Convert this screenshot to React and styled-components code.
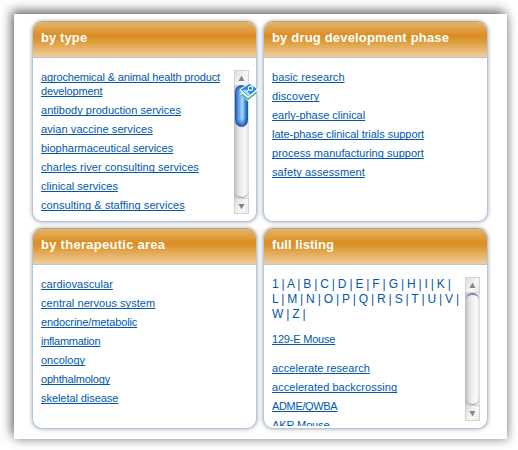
import React from 'react';
import styled, { createGlobalStyle } from 'styled-components';

const GlobalStyle = createGlobalStyle`
  body {
    margin: 0;
    background: #ffffff;
    font-family: 'Liberation Sans', Arial, sans-serif;
  }
`;

const Page = styled.div`
  box-sizing: border-box;
  width: 518px;
  height: 450px;
  padding: 14px 11px 11px 14px;
  overflow: hidden;
`;

const Sheet = styled.main`
  box-sizing: border-box;
  width: 493px;
  height: 425px;
  padding: 7px 0 0 18px;
  background: #ffffff;
  box-shadow:
    -3px -4px 10px rgba(0, 0, 0, 0.5),
    2px 2px 9px rgba(0, 0, 0, 0.26);
`;

const Grid = styled.div`
  display: grid;
  grid-template-columns: 225px 225px;
  grid-template-rows: 201px 201px;
  gap: 6px;
`;

const Panel = styled.section`
  box-sizing: border-box;
  display: flex;
  flex-direction: column;
  border: 1px solid #b0c6df;
  border-top-color: #a9a698;
  border-radius: 10px;
  background: #ffffff;
  box-shadow: 0 0 4px rgba(0, 0, 0, 0.35);
`;

const PanelTitle = styled.h2`
  box-sizing: border-box;
  flex: none;
  height: 36px;
  margin: 0;
  padding: 0 8px;
  border-bottom: 1px solid #b9c9da;
  border-radius: 9px 9px 0 0;
  background: linear-gradient(#e5b268 0%, #e0a146 20%, #da8c20 40%, #e0a144 60%, #f0cd9b 100%);
  color: #ffffff;
  font-size: 13px;
  font-weight: bold;
  line-height: 32px;
  letter-spacing: ${({ $spacing }) => $spacing || 0}px;
  white-space: nowrap;
`;

const PanelBody = styled.div`
  display: flex;
  justify-content: space-between;
  height: ${({ $height }) => $height || 142}px;
  margin-top: 12px;
  padding: 0 7px 0 8px;
`;

const LinkList = styled.ul`
  flex: 1;
  min-width: 0;
  margin: 0;
  padding: 0;
  list-style: none;
`;

const Listing = styled.div`
  flex: 1;
  min-width: 0;
  overflow: hidden;
`;

const LinkItem = styled.li`
  margin: 0 0 ${({ $gap }) => $gap || 5}px;
  font-size: 11px;
  line-height: 14px;
  white-space: nowrap;
`;

const Link = styled.a`
  color: #0058ac;
  letter-spacing: ${({ $spacing }) => $spacing || 0}px;
  text-decoration: underline;
  text-decoration-thickness: 1px;
  text-decoration-skip-ink: none;
  text-underline-offset: 1px;
`;

const Letters = styled.p`
  margin: 0 0 10px;
  color: #0058ac;
  font-size: 12px;
  line-height: 15px;
  word-spacing: -0.42px;
`;

const LetterRow = styled.span`
  display: block;
  white-space: nowrap;
`;

const ScrollTrack = styled.div`
  position: relative;
  flex: none;
  display: flex;
  flex-direction: column;
  width: 15px;
  height: 144px;
  background: linear-gradient(90deg, #b9b9b9, #dedede 25%, #ececec 45%, #fafafa 75%, #dcdcdc);
`;

const ScrollButton = styled.div`
  display: flex;
  align-items: center;
  justify-content: center;
  box-sizing: border-box;
  height: 16px;
  border: 1px solid #d2d2d2;
  background: linear-gradient(120deg, #dddddd, #f8f8f8 60%, #e8e8e8);
`;

const ScrollLane = styled.div`
  flex: 1;
  border-radius: 0 0 8px 8px;
  border-bottom: 1px solid #a0a0a0;
`;

const ScrollThumb = styled.div`
  box-sizing: border-box;
  width: 13px;
  height: 42px;
  margin: -1px 1px 0;
  border: 1px solid #1c55b4;
  border-radius: 7px;
  background:
    linear-gradient(rgba(10, 45, 130, 0.6), transparent 12%, transparent 82%, rgba(10, 50, 170, 0.7)),
    linear-gradient(90deg, #2869cf, #78b5f2 35%, #a5d8fc 60%, #4e94e2 80%, #245fba);
`;

const ThumbEdge = styled.div`
  height: 4px;
  margin: 0 1px;
  border-top: 2px solid #73839f;
  border-radius: 7px 7px 0 0;
`;

const Badge = styled.svg`
  position: absolute;
  left: 5px;
  top: 12px;
`;

function Arrow({ down }) {
  return (
    <svg width="7" height="7" viewBox="0 0 7 7">
      <path d={down ? 'M0.5 1h6L3.5 6.5z' : 'M0.5 6h6L3.5 0.5z'} fill="#858585" />
    </svg>
  );
}

function ImageBadge() {
  return (
    <Badge width="20" height="20" viewBox="0 0 20 20">
      <path d="M1 11.5L17 8l2.5 2.500L9 19.500z" fill="#ffffff" />
      <path d="M2.500 12.500L9 17l9-7" fill="none" stroke="#5fb87a" strokeWidth="2" />
      <path d="M0.500 7.500L10.500 0.500l9 6.500-10.200 9z" fill="#ffffff" />
      <path d="M2 7.600L10.500 1.700l7.500 5.200-8.700 7.600z" fill="#2389e2" />
      <path d="M3.500 8l2.800-0.600 5.200 5-2.200 1.500z" fill="#a6dcfb" />
      <circle cx="11.500" cy="6.300" r="2.100" fill="#1b70ce" stroke="#ffffff" strokeWidth="1.200" />
      <path d="M10 7.800L7.300 9.500" stroke="#ffffff" strokeWidth="1.300" />
    </Badge>
  );
}

function Scrollbar({ thumb }) {
  return (
    <ScrollTrack>
      <ScrollButton><Arrow /></ScrollButton>
      <ScrollLane>{thumb ? <ScrollThumb /> : <ThumbEdge />}</ScrollLane>
      <ScrollButton><Arrow down /></ScrollButton>
      {thumb && <ImageBadge />}
    </ScrollTrack>
  );
}

const types = [
  { label: <>agrochemical &amp; animal health product<br />development</>, spacing: -0.14 },
  { label: 'antibody production services', spacing: 0.02 },
  { label: 'avian vaccine services', spacing: 0.08 },
  { label: 'biopharmaceutical services', spacing: -0.02 },
  { label: 'charles river consulting services', spacing: 0.06 },
  { label: 'clinical services', spacing: 0.03 },
  { label: 'consulting & staffing services', spacing: 0.07 },
];

const phases = [
  { label: 'basic research', spacing: 0.08 },
  { label: 'discovery', spacing: 0.1 },
  { label: 'early-phase clinical', spacing: -0.02 },
  { label: 'late-phase clinical trials support', spacing: -0.04 },
  { label: 'process manufacturing support', spacing: 0.03 },
  { label: 'safety assessment', spacing: 0.1 },
];

const areas = [
  { label: 'cardiovascular', spacing: 0.07 },
  { label: 'central nervous system', spacing: 0.05 },
  { label: 'endocrine/metabolic', spacing: -0.12 },
  { label: 'inflammation', spacing: -0.25 },
  { label: 'oncology' },
  { label: 'ophthalmology', spacing: -0.2 },
  { label: 'skeletal disease', spacing: -0.06 },
];

const listing = [
  { label: '129-E Mouse', gap: 15, spacing: -0.2 },
  { label: 'accelerate research', spacing: 0.07 },
  { label: 'accelerated backcrossing', spacing: 0.04 },
  { label: 'ADME/QWBA', spacing: -0.35 },
  { label: 'AKR Mouse', spacing: -0.14 },
];

const letterRows = [
  '1 | A | B | C | D | E | F | G | H | I | K |',
  'L | M | N | O | P | Q | R | S | T | U | V |',
  'W | Z |',
];

function Links({ items }) {
  return items.map((item, i) => (
    <LinkItem key={i} $gap={item.gap}>
      <Link $spacing={item.spacing}>{item.label}</Link>
    </LinkItem>
  ));
}

function App() {
  return (
    <Page>
      <GlobalStyle />
      <Sheet>
        <Grid>
          <Panel>
            <PanelTitle $spacing={0.1}>by type</PanelTitle>
            <PanelBody $height={144}>
              <LinkList><Links items={types} /></LinkList>
              <Scrollbar thumb />
            </PanelBody>
          </Panel>
          <Panel>
            <PanelTitle $spacing={0.18}>by drug development phase</PanelTitle>
            <PanelBody>
              <LinkList><Links items={phases} /></LinkList>
            </PanelBody>
          </Panel>
          <Panel>
            <PanelTitle $spacing={0.27}>by therapeutic area</PanelTitle>
            <PanelBody>
              <LinkList><Links items={areas} /></LinkList>
            </PanelBody>
          </Panel>
          <Panel>
            <PanelTitle $spacing={0.05}>full listing</PanelTitle>
            <PanelBody $height={149}>
              <Listing>
                <Letters>
                  {letterRows.map((row) => (
                    <LetterRow key={row}>{row}</LetterRow>
                  ))}
                </Letters>
                <LinkList><Links items={listing} /></LinkList>
              </Listing>
              <Scrollbar />
            </PanelBody>
          </Panel>
        </Grid>
      </Sheet>
    </Page>
  );
}

export default App;
